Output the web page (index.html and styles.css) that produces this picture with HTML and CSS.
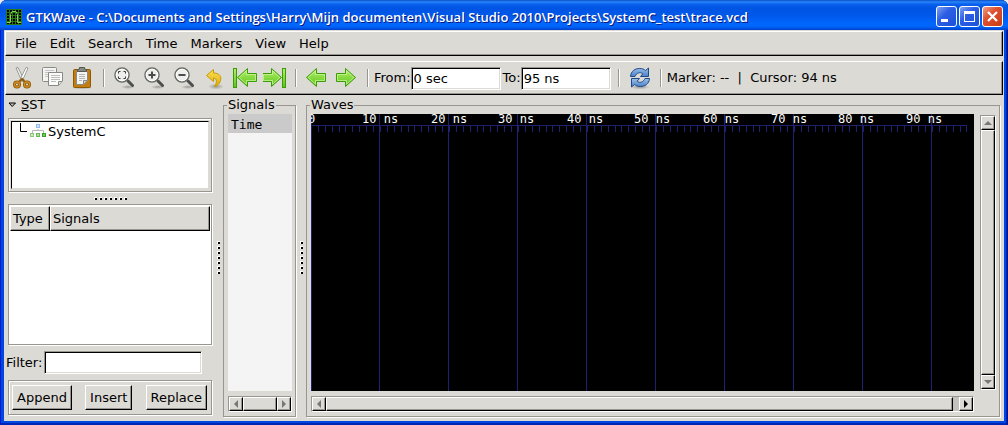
FILE: index.html
```html
<!DOCTYPE html>
<html lang="en">
<head>
<meta charset="utf-8">
<title>GTKWave</title>
<link rel="stylesheet" href="styles.css">
</head>
<body>
<svg class="defs" aria-hidden="true">
  <defs>
    <linearGradient id="green" x1="0" y1="0" x2="0" y2="1"><stop offset="0" stop-color="#b4f06a"/><stop offset="1" stop-color="#5cc41c"/></linearGradient>
    <linearGradient id="gold" x1="0" y1="0" x2="0" y2="1"><stop offset="0" stop-color="#fbe25a"/><stop offset="1" stop-color="#e0a80c"/></linearGradient>
    <linearGradient id="blue" x1="0" y1="0" x2="0" y2="1"><stop offset="0" stop-color="#9cc0ea"/><stop offset="1" stop-color="#4a80c8"/></linearGradient>
    <radialGradient id="shade"><stop offset="0" stop-color="#000" stop-opacity=".3"/><stop offset="1" stop-color="#000" stop-opacity="0"/></radialGradient>
    <g id="lens">
      <ellipse cx="14" cy="20" rx="7" ry="2" fill="url(#shade)"/>
      <path d="M14 14L18.500 18.500" stroke="#4c4f4b" stroke-width="3" stroke-linecap="round"/>
      <circle cx="8" cy="8" r="7" fill="#eeeeec" stroke="#6a6c68" stroke-width="1.500"/>
      <circle cx="8" cy="8" r="5.800" fill="none" stroke="#fff"/>
    </g>
    <path id="arrow" d="M1.500 11.500L11.500 2.500V7.500H20.500V15.500H11.500V20.500Z" fill="url(#green)" stroke="#3c9c08" stroke-linejoin="round"/>
    <path id="arrowlight" d="M3.200 11.500L10.500 4.800V8.500H19.500V14.500H10.500V18.200Z" fill="none" stroke="#d0f8a0" opacity=".7"/>
  </defs>
</svg>
<div class="window">
  <header class="titlebar">
    <svg class="appicon" width="16" height="16" viewBox="0 0 16 16">
      <rect width="16" height="16" fill="#000"/>
      <path d="M.5 0V16M3.500 0V16M6.500 0V16M9.500 0V16M12.500 0V16M15.500 0V16M0 .5H16M0 3.500H16M0 6.500H16M0 9.500H16M0 12.500H16M0 15.500H16" stroke="#2a7a1c"/>
      <path d="M1 13.500H4.500V5.500L6 2.500H10L11.500 5.500V13.500H15" fill="none" stroke="#7fd850"/>
    </svg>
    <h1 class="title">GTKWave - C:\Documents and Settings\Harry\Mijn documenten\Visual Studio 2010\Projects\SystemC_test\trace.vcd</h1>
    <div class="caption">
      <button class="cap" aria-label="Minimize"><svg width="19" height="19"><path d="M4 13.500H11" stroke="#fff" stroke-width="3"/></svg></button>
      <button class="cap" aria-label="Maximize"><svg width="19" height="19"><path d="M4 5.500H15" stroke="#fff" stroke-width="3"/><rect x="4.500" y="4.500" width="10" height="10" fill="none" stroke="#fff"/></svg></button>
      <button class="cap close" aria-label="Close"><svg width="19" height="19"><path d="M5 5L14 14M14 5L5 14" stroke="#fff" stroke-width="2.200"/></svg></button>
    </div>
  </header>
  <div class="client">
    <nav class="bar menubar">
      <button class="menu">File</button><button class="menu">Edit</button><button class="menu">Search</button><button class="menu">Time</button><button class="menu">Markers</button><button class="menu">View</button><button class="menu">Help</button>
    </nav>
    <div class="bar toolbar">
      <button class="tool" aria-label="Cut"><svg width="24" height="24" viewBox="0 0 24 24">
        <path d="M5 2L7 1.500L13 13.500L11 15.500Z" fill="#eeeeec" stroke="#888a85" stroke-width=".8"/><path d="M17 2L15 1.500L9 13.500L11 15.500Z" fill="#fff" stroke="#888a85" stroke-width=".8"/>
        <path d="M8.500 15.500L11 13L13.500 15.500" fill="none" stroke="#8f5902" stroke-width="2"/>
        <ellipse cx="6" cy="18.500" rx="2.500" ry="2.500" fill="none" stroke="#8f5902" stroke-width="3"/><ellipse cx="16" cy="18.500" rx="2.500" ry="2.500" fill="none" stroke="#8f5902" stroke-width="3"/>
        <ellipse cx="6" cy="18.500" rx="2.500" ry="2.500" fill="none" stroke="#d08a20" stroke-width="1.300"/><ellipse cx="16" cy="18.500" rx="2.500" ry="2.500" fill="none" stroke="#d08a20" stroke-width="1.300"/></svg></button>
      <button class="tool" aria-label="Copy"><svg width="24" height="24" viewBox="0 0 24 24">
        <rect x="1.500" y="1.500" width="14" height="14" rx="1" fill="#f4f4f2" stroke="#888a85"/><path d="M4 4.500H13M4 6.500H13M4 8.500H10M4 10.500H10" stroke="#c4c4c2"/>
        <path d="M7.500 6.500H21.500V15L17.500 19.500H7.500Z" fill="#fafafa" stroke="#888a85" stroke-linejoin="round"/><path d="M10 9.500H19M10 11.500H19M10 13.500H19M10 15.500H15" stroke="#bcbcba"/><path d="M17.500 19V15.500H21" fill="#ddd" stroke="#888a85"/></svg></button>
      <button class="tool" aria-label="Paste"><svg width="24" height="24" viewBox="0 0 24 24">
        <ellipse cx="11" cy="21.500" rx="11" ry="2" fill="url(#shade)"/>
        <rect x="2.500" y="3.500" width="17" height="18" rx="1" fill="#c17d11" stroke="#8f5902"/>
        <path d="M5.500 5.500H16.500V14.500L12.500 18.500H5.500Z" fill="#f4f4f2" stroke="#888a85"/><path d="M8 8.500H14M8 10.500H14M8 12.500H14M8 14.500H11" stroke="#b4b4b2"/><path d="M12.500 18V14.500H16" fill="#ccc" stroke="#888a85"/>
        <path d="M6.500 5.500V3.500L8.500 3V1.500H13.500V3L15.500 3.500V5.500Z" fill="#888a85" stroke="#555753"/></svg></button>
      <span class="sep"></span>
      <button class="tool" aria-label="Zoom fit"><svg width="24" height="24" viewBox="0 0 24 24"><g transform="translate(1 1)"><use href="#lens"/><path d="M4.500 6.500V4.500H6.500M9.500 4.500H11.500V6.500M11.500 9.500V11.500H9.500M6.500 11.500H4.500V9.500" fill="none" stroke="#3a3c3a"/></g></svg></button>
      <button class="tool" aria-label="Zoom in"><svg width="24" height="24" viewBox="0 0 24 24"><g transform="translate(1 1)"><use href="#lens"/><path d="M4.500 8H11.500M8 4.500V11.500" stroke="#4a4c4a" stroke-width="2"/></g></svg></button>
      <button class="tool" aria-label="Zoom out"><svg width="24" height="24" viewBox="0 0 24 24"><g transform="translate(1 1)"><use href="#lens"/><path d="M4.500 8H11.500" stroke="#4a4c4a" stroke-width="2"/></g></svg></button>
      <button class="tool" aria-label="Undo zoom"><svg width="24" height="24" viewBox="0 0 24 24"><ellipse cx="13" cy="20.500" rx="8" ry="3" fill="url(#shade)"/><path d="M3.500 9.500L10.500 3.500V7C17 7 18.500 11 17.500 14.500C16.500 18.500 13 20.500 11.500 20.500C14 17 14.500 12.500 10.500 12V15.500Z" fill="url(#gold)" stroke="#c49a00" stroke-linejoin="round"/></svg></button>
      <button class="tool" aria-label="Zoom to start"><svg width="24" height="24" viewBox="0 0 24 24"><g transform="translate(3 0)"><use href="#arrow"/><use href="#arrowlight"/></g><rect x=".5" y="2.500" width="3" height="19" fill="url(#green)" stroke="#3c9c08"/></svg></button>
      <button class="tool" aria-label="Zoom to end"><svg width="24" height="24" viewBox="0 0 24 24"><g transform="matrix(-1 0 0 1 20 0)"><use href="#arrow"/><use href="#arrowlight"/></g><rect x="19.500" y="2.500" width="3" height="19" fill="url(#green)" stroke="#3c9c08"/></svg></button>
      <span class="sep"></span>
      <button class="tool" aria-label="Find previous edge"><svg width="24" height="24" viewBox="0 0 24 24"><use href="#arrow"/><use href="#arrowlight"/></svg></button>
      <button class="tool" aria-label="Find next edge"><svg width="24" height="24" viewBox="0 0 24 24"><g transform="matrix(-1 0 0 1 22 0)"><use href="#arrow"/><use href="#arrowlight"/></g></svg></button>
      <span class="sep"></span>
      <label for="from">From:</label><input class="entry time" id="from" value="0 sec">
      <label class="to" for="to">To:</label><input class="entry time" id="to" value="95 ns">
      <span class="sep after"></span>
      <button class="tool" aria-label="Reload"><svg width="24" height="24" viewBox="0 0 24 24"><ellipse cx="12" cy="21" rx="10" ry="2.500" fill="url(#shade)"/>
        <path d="M2.500 10.500C3 5 7 2.500 11.500 2.500C14.500 2.500 16 3.200 17.500 4.500L20.500 2V10.500H12.500L14.800 7.800C12 5.500 8.500 7 7 10.500Z" fill="url(#blue)" stroke="#204a87" stroke-linejoin="round"/>
        <path d="M21.500 12.500C21 18 17 20.500 12.500 20.500C9.500 20.500 8 19.800 6.500 18.500L3.500 21V12.500H11.500L9.200 15.200C12 17.500 15.500 16 17 12.500Z" fill="url(#blue)" stroke="#204a87" stroke-linejoin="round"/></svg></button>
      <span class="sep"></span>
      <output class="status">Marker: -- &nbsp;|&nbsp; Cursor: 94 ns</output>
    </div>
    <main class="panes">
      <section class="sst">
        <button class="expander"><svg width="9" height="6"><path d="M1 1H7.500L4.200 4.500Z" fill="#bbb" stroke="#000"/></svg><span><u>S</u>ST</span></button>
        <div class="frame treeframe"><div class="tree">
          <svg width="8" height="14"><path d="M.5 0V8.500H7" fill="none" stroke="#000"/></svg>
          <svg width="16" height="16"><path d="M8 6V8M2.500 10V7.500H13.500V10" fill="none" stroke="#b8b8b8"/><rect x="6.500" y="1.500" width="3" height="3" fill="#cfe2fa" stroke="#94bcec"/><rect x=".5" y="10.500" width="3" height="3" fill="#cdeec2" stroke="#8cc878"/><rect x="6.500" y="10.500" width="3" height="3" fill="#a8e09a" stroke="#68b858"/><rect x="12.500" y="10.500" width="3" height="3" fill="#70cc60" stroke="#3ca030"/></svg>
          <span>SystemC</span>
        </div></div>
        <div class="grip grip-h"></div>
        <div class="frame listframe">
          <table class="list"><thead><tr><th class="type">Type</th><th>Signals</th></tr></thead></table>
        </div>
        <div class="filter"><label for="filter">Filter:</label><input class="entry" id="filter"></div>
        <div class="frame actions"><button class="push">Append</button><button class="push">Insert</button><button class="push">Replace</button></div>
      </section>
      <div class="grip grip-v"></div>
      <fieldset class="group signals">
        <legend>Signals</legend>
        <div class="names"><div class="row">Time</div></div>
        <div class="scroll"><button class="arrow" aria-label="Left"><svg width="6" height="8"><path d="M5 0V8L1 4Z" fill="#777"/></svg></button><div class="thumb"></div><button class="arrow" aria-label="Right"><svg width="6" height="8"><path d="M1 0V8L5 4Z" fill="#777"/></svg></button></div>
      </fieldset>
      <div class="grip grip-v"></div>
      <fieldset class="group waves">
        <legend>Waves</legend>
        <svg class="canvas" role="img" aria-label="Waveforms">
          <defs><pattern id="ticks" width="69" height="6" patternUnits="userSpaceOnUse" x="0" y="12"><path d="M.5 0V6M7.500 0V6M14.500 0V6M21.500 0V6M28.500 0V6M34.500 0V6M41.500 0V6M48.500 0V6M55.500 0V6M62.500 0V6" stroke="#202070"/></pattern></defs>
          <path d="M0 11.500H656" stroke="#202070"/><rect y="12" width="656" height="6" fill="url(#ticks)"/>
          <path class="major" d="M.5 0V9999M68.500 0V9999M137.500 0V9999M206.500 0V9999M275.500 0V9999M344.500 0V9999M413.500 0V9999M482.500 0V9999M551.500 0V9999M620.500 0V9999"/>
          <g class="times"><text x="-3" y="9">0</text><text x="51" y="9">10 ns</text><text x="120" y="9">20 ns</text><text x="187" y="9">30 ns</text><text x="256" y="9">40 ns</text><text x="323" y="9">50 ns</text><text x="392" y="9">60 ns</text><text x="460" y="9">70 ns</text><text x="527" y="9">80 ns</text><text x="595" y="9">90 ns</text></g>
        </svg>
        <div class="scroll vertical"><button class="arrow" aria-label="Up"><svg width="8" height="6"><path d="M0 5H8L4 1Z" fill="#777"/></svg></button><div class="thumb"></div><button class="arrow" aria-label="Down"><svg width="8" height="6"><path d="M0 1H8L4 5Z" fill="#777"/></svg></button></div>
        <div class="scroll"><button class="arrow" aria-label="Left"><svg width="6" height="8"><path d="M5 0V8L1 4Z" fill="#777"/></svg></button><div class="thumb"></div><span class="trough"></span><button class="arrow" aria-label="Right"><svg width="6" height="8"><path d="M1 0V8L5 4Z" fill="#000"/></svg></button></div>
      </fieldset>
    </main>
  </div>
</div>
</body>
</html>
```
FILE: styles.css
```css
* { box-sizing: border-box; }
html { height: 100%; background: #e9eaf0; }
body { margin: 0; height: 100%; font: 13px/16px "DejaVu Sans", sans-serif; color: #000; }
button { font: inherit; color: inherit; padding: 0; border: 0; background: none; }
svg { display: block; }
.defs { position: absolute; width: 0; height: 0; }

/* Window frame */
.window {
  display: flex; flex-direction: column; min-height: 100%;
  padding: 0 4px 4px; overflow: hidden;
  border-radius: 7px 7px 0 0;
  background: #0046e0;
  box-shadow: inset 1px 0 #0019cf, inset -1px 0 #00138c, inset -2px -2px #0026b4;
}
.titlebar {
  display: flex; align-items: center; height: 30px; margin: 0 -4px; padding: 3px 5px 0 6px;
  background: linear-gradient(#0a4fc8 0, #2a86fa 2px, #0a62ee 4px, #0054e3 8px, #0058ea 16px, #0068ff 24px, #0062f8 27px, #0040c8 30px);
}
.title { flex: 1; margin: 0 0 0 4px; font: 600 13px/18px "Open Sans", sans-serif; color: #fff; text-shadow: 1px 1px #0a1883; white-space: nowrap; }
.caption { display: flex; gap: 2px; }
.cap { width: 21px; height: 21px; border: 1px solid #fff; border-radius: 3px; background: linear-gradient(135deg, #7fa2f2, #2c5fe4 40%, #1c50d8); }
.close { background: linear-gradient(135deg, #f0a088, #dd5030 40%, #c83c14); }
.client { flex: 1; display: flex; flex-direction: column; padding-top: 1px; background: #dcdad5; }

/* Menu bar and toolbar */
.bar {
  display: flex; align-items: center; margin: 0 1px;
  border: 1px solid; border-color: #fff #000 #000 #fff;
  box-shadow: inset -1px -1px #98968f;
}
.menubar { height: 25px; padding-left: 3px; }
.menu { padding: 0 6px; height: 20px; margin-right: 1px; }
.toolbar { height: 34px; margin-top: 5px; padding-left: 2px; }
.tool { width: 30px; height: 30px; display: grid; place-items: center; flex: none; }
.sep { width: 2px; height: 18px; margin: 0 5px; background: linear-gradient(90deg, #98968f 50%, #fff 50%); flex: none; }
.after { margin-left: 7px; }
.entry {
  font: inherit; height: 23px; padding: 0 2px; background: #fff; outline: 0; border-radius: 0;
  border: 1px solid; border-color: #98968f #fff #fff #98968f;
  box-shadow: inset 1px 1px #000, inset -1px -1px #dcdad5;
}
.time { width: 90px; }
.to { margin-left: 2px; }
.status { white-space: nowrap; }

/* Panes */
.panes { flex: 1; display: flex; padding: 2px 4px 4px 0; }
.sst { width: 209px; display: flex; flex-direction: column; padding: 0 1px 2px 4px; }
.expander { display: flex; align-items: center; gap: 4px; padding-left: 0; }
.frame { border: 1px solid #98968f; box-shadow: 1px 1px #fff, inset 1px 1px #fff; }
.treeframe { margin-top: 5px; padding: 2px; }
.tree { height: 68px; display: flex; align-items: flex-start; gap: 2px; padding: 1px 8px; line-height: 18px; background: #fff; border: 1px solid; border-color: #000 #dcdad5 #dcdad5 #000; }
.grip { flex: none; }
.grip-h {
  width: 33px; height: 3px; margin: 5px auto 4px;
  background: linear-gradient(90deg, transparent 3px, #dcdad5 3px) 0 0 / 5px 3px, conic-gradient(from 90deg at 1px 1px, #000 90deg, #fff 90deg) 0 0 / 5px 3px;
}
.grip-v {
  width: 3px; height: 33px; margin: auto 3px auto 4px;
  background: linear-gradient(transparent 3px, #dcdad5 3px) 0 0 / 3px 5px, conic-gradient(from 90deg at 1px 1px, #000 90deg, #fff 90deg) 0 0 / 3px 5px;
}
.listframe { flex: 1; background: #fff; padding: 1px; }
.list { width: 100%; border-collapse: separate; border-spacing: 0; }
.list th { height: 25px; padding: 0 2px; text-align: left; font-weight: normal; background: #dcdad5; border: 1px solid; border-color: #fff #000 #000 #fff; box-shadow: inset -1px -1px #98968f; }
.list .type { width: 40px; }
.filter { display: flex; align-items: center; gap: 2px; margin: 6px 10px 6px -2px; }
.filter .entry { flex: 1; min-width: 0; }
.actions { display: flex; justify-content: space-between; padding: 4px 4px 4px 3px; }
.push { height: 25px; padding: 0 4px; border: 1px solid; border-color: #fff #000 #000 #fff; box-shadow: inset -1px -1px #98968f; }

.group { margin: 0; min-width: 0; border: 1px solid #98968f; box-shadow: 1px 1px #fff; }
legend { padding: 0 1px; margin-left: -1px; }
.signals { width: 73px; display: flex; flex-direction: column; gap: 5px; padding: 1px 3px 4px 4px; }
.waves { flex: 1; display: grid; grid-template: minmax(0, 1fr) 16px / minmax(0, 1fr) 16px; gap: 5px 6px; padding: 1px 3px 4px 4px; }
.names { flex: 1; background: #f4f4f4; }
.row { background: #cacaca; font: 13px/16px "DejaVu Sans Mono", monospace; padding: 3px 0 0 3px; }
.canvas { background: #000; width: 100%; height: 100%; }
.major { stroke: #202070; }
.times { fill: #fff; font: 12px "DejaVu Sans Mono", monospace; }

/* Scroll bars */
.scroll { display: flex; height: 16px; background: #c4c2bd; border: 1px solid; border-color: #98968f #fff #fff #98968f; }
.vertical { flex-direction: column; width: 16px; height: auto; margin: 1px 0; }
.arrow { width: 14px; height: 14px; display: grid; place-items: center; flex: none; background: #dcdad5; }
.arrow, .thumb { border: 1px solid; border-color: #fff #000 #000 #fff; box-shadow: inset -1px -1px #98968f; }
.thumb { flex: 1; background: #dcdad5; }
.trough { width: 6px; }
```
